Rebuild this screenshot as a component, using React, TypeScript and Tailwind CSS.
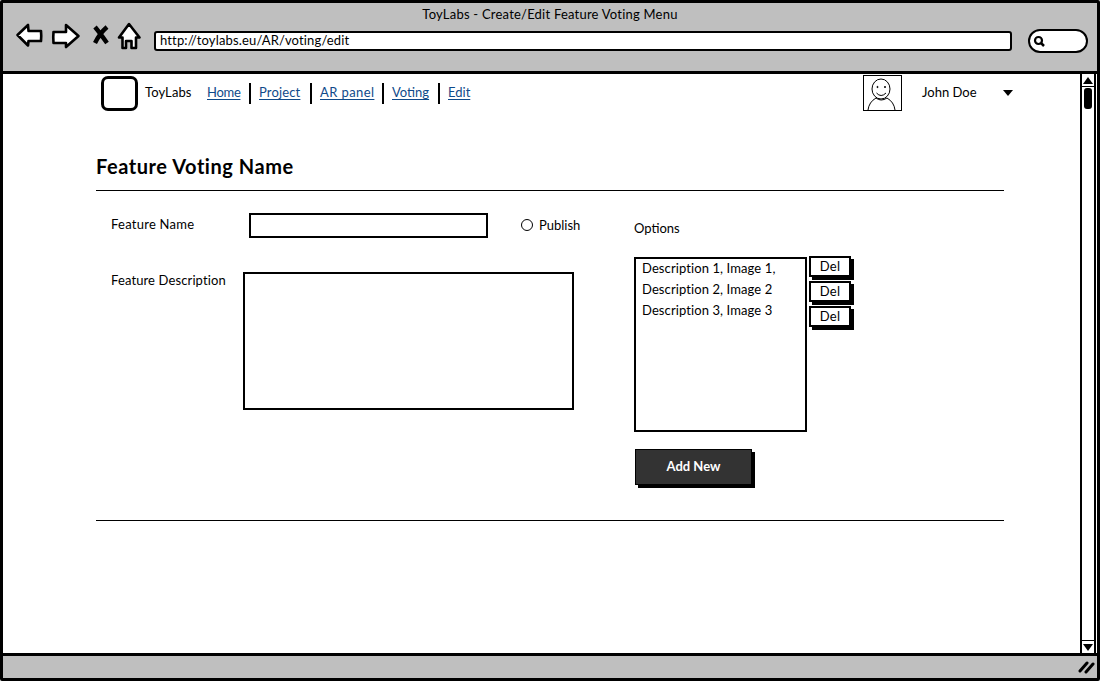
const font = { fontFamily: '"Lato", "Noto Sans", sans-serif' };

function NavIcons() {
  return (
    <svg width="137" height="32" viewBox="1 2 137 32" className="shrink-0 overflow-visible" fill="white" stroke="black" strokeWidth="2.600" strokeLinejoin="round">
      <path d="M15.500 12 L26 2 L26.500 8 L39 8 Q39.500 13 39 18 L26.500 18 L26 22.500 Z" />
      <path d="M51.500 9 L64 9 L64 2 L76.500 13 L64 24 L64 20 L51.500 20 Q51 14 51.500 9 Z" />
      <path d="M93 4 Q98 10 105 20 M105 4 Q98 10 93 20" fill="none" strokeWidth="4.400" />
      <path d="M127 1 L137.500 14.500 L134 14.500 L134 25 L129.500 25 L129.500 18 L124 18 L124 25 L120.500 25 L120.500 14.500 L117 14.500 Z" />
    </svg>
  );
}

function UrlBar() {
  return (
    <div className="ml-[14px] h-[20px] w-[858px] shrink-0 rounded-[3px] border-[2.500px] border-black bg-white pl-[4px] text-[13px] leading-[15px] text-black tracking-[0.15px]">
      http://toylabs.eu/AR/voting/edit
    </div>
  );
}

function SearchBox() {
  return (
    <div className="ml-[16px] flex h-[24px] w-[60px] shrink-0 items-center rounded-[12px] border-[2.500px] border-black bg-white pl-[2px]">
      <svg width="14" height="14" viewBox="0 0 14 14" fill="none" stroke="black">
        <circle cx="6.500" cy="6.500" r="3.500" strokeWidth="2.200" />
        <path d="M9 9 L12 12" strokeWidth="2.500" />
      </svg>
    </div>
  );
}

function Avatar() {
  return (
    <svg width="39" height="36" viewBox="0 0 39 36" className="shrink-0" fill="none" stroke="black">
      <rect x="0.500" y="0.500" width="38" height="35" strokeWidth="1" />
      <ellipse cx="18" cy="14" rx="9" ry="10" strokeWidth="1" />
      <circle cx="14.500" cy="12" r="0.600" fill="black" />
      <circle cx="22" cy="12" r="0.600" fill="black" />
      <path d="M13.500 18 Q18 23 23 18" strokeWidth="1" />
      <path d="M5 35 Q6 27 13 23 M32 35 Q31 27 24 23 M13 23 Q18 27 24 23" strokeWidth="1" />
    </svg>
  );
}

function NavLink({ label, className }: { label: string; className: string }) {
  return (
    <div className={`flex h-[21px] items-center ${className}`}>
      <span className="text-[13px] text-[#0f4a8a] underline underline-offset-2">{label}</span>
    </div>
  );
}

function DelButton() {
  return (
    <div className="flex h-[21px] w-[42px] items-center justify-center border-2 border-black bg-white text-[13px] tracking-[0.2px] text-black shadow-[3px_3px_0_#000]">
      Del
    </div>
  );
}

function Scrollbar() {
  return (
    <div className="flex w-[16px] shrink-0 flex-col border-x-2 border-black bg-white">
      <div className="flex h-[13px] items-center justify-center border-b border-black">
        <div className="h-0 w-0 border-x-[5px] border-b-[7px] border-x-transparent border-b-black" />
      </div>
      <div className="ml-[2px] mt-[1px] h-[21px] w-[8px] rounded-[3px] bg-black" />
      <div className="flex-1" />
      <div className="flex h-[13px] items-center justify-center border-t border-black">
        <div className="h-0 w-0 border-x-[5px] border-t-[7px] border-x-transparent border-t-black" />
      </div>
    </div>
  );
}

export default function App() {
  return (
    <div className="h-[682px] w-[1100px] overflow-hidden bg-white" style={font}>
      <div className="flex h-[681px] flex-col rounded-[2px] border-[3px] border-black text-black">
        {/* Browser chrome */}
        <div className="h-[71px] shrink-0 border-b-[3px] border-black bg-[#bfbfbf]">
          <div className="pt-[3px] text-center text-[13px] leading-[17px] tracking-[0.22px]">
            ToyLabs - Create/Edit Feature Voting Menu
          </div>
          <div className="mt-[2px] flex items-center">
            <NavIcons />
            <UrlBar />
            <SearchBox />
          </div>
        </div>

        {/* Page */}
        <div className="flex min-h-0 flex-1">
          <div className="min-w-0 flex-1 pl-[93px]">
            {/* Top nav */}
            <div className="mt-[1px] flex h-[36px] items-center pl-[5px] pr-[67px]">
              <div className="h-[35px] w-[37px] shrink-0 rounded-[7px] border-[3px] border-black" />
              <span className="ml-[7px] mr-[13px] w-[49px] text-[13px] tracking-[0.1px]">ToyLabs</span>
              <NavLink label="Home" className="mr-[8px] w-[44px] border-r-2 border-black tracking-[-0.3px]" />
              <NavLink label="Project" className="mr-[8px] w-[53px] border-r-2 border-black tracking-[0.15px]" />
              <NavLink label="AR panel" className="mr-[8px] w-[64px] border-r-2 border-black tracking-[0.4px]" />
              <NavLink label="Voting" className="mr-[8px] w-[48px] border-r-2 border-black" />
              <NavLink label="Edit" className="" />
              <div className="flex-1" />
              <Avatar />
              <span className="ml-[20px] w-[81px] text-[13px]">John Doe</span>
              <div className="h-0 w-0 border-x-[5px] border-t-[6px] border-x-transparent border-t-black" />
            </div>

            {/* Form */}
            <div className="mt-[40px] w-[908px]">
              <h1 className="h-[39px] text-[20px] font-bold leading-[31px] tracking-[0.55px]">Feature Voting Name</h1>
              <div className="h-px bg-black" />
              <div className="flex h-[329px]">
                <div className="w-[538px] shrink-0">
                  <div className="flex pt-[22px]">
                    <span className="ml-[15px] w-[138px] text-[13px] leading-[22px] tracking-[0.25px]">Feature Name</span>
                    <div className="h-[25px] w-[239px] border-[2.500px] border-black" />
                    <div className="ml-[33px] mt-[6px] h-[12px] w-[12px] rounded-full border-[1.500px] border-black" />
                    <span className="ml-[6px] text-[13px] leading-[25px]">Publish</span>
                  </div>
                  <div className="mt-[34px] flex">
                    <span className="ml-[15px] w-[132px] text-[13px] leading-[17px] tracking-[0.12px]">Feature Description</span>
                    <div className="h-[138px] w-[331px] border-2 border-black" />
                  </div>
                </div>
                <div className="min-w-0 flex-1">
                  <div className="pt-[29px] text-[13px] leading-[17px]">Options</div>
                  <div className="mt-[20px] flex">
                    <div className="h-[175px] w-[173px] shrink-0 border-2 border-black pl-[6px] text-[13px] leading-[21px] tracking-[0.1px]">
                      <div className="-mt-[1px]">Description 1, Image 1,</div>
                      <div>Description 2, Image 2</div>
                      <div>Description 3, Image 3</div>
                    </div>
                    <div className="ml-[2px] -mt-[1px] flex flex-col gap-[4px]">
                      <DelButton />
                      <DelButton />
                      <DelButton />
                    </div>
                  </div>
                  <div className="mt-[17px] ml-[1px] flex h-[36px] w-[117px] items-center justify-center border border-black bg-[#333333] text-[13px] font-bold text-white shadow-[3px_3px_0_#000]">
                    Add New
                  </div>
                </div>
              </div>
              <div className="h-px bg-black" />
            </div>
          </div>
          <Scrollbar />
          <div className="w-[1px] shrink-0" />
        </div>

        {/* Status bar */}
        <div className="flex h-[25px] shrink-0 items-center justify-end border-t-[3px] border-black bg-[#bfbfbf] pr-[1px]">
          <svg width="18" height="14" viewBox="0 0 18 14" fill="none" stroke="black" strokeWidth="3" strokeLinecap="round">
            <path d="M2 11 L9 3 M8 12 L15 4" />
          </svg>
        </div>
      </div>
    </div>
  );
}
